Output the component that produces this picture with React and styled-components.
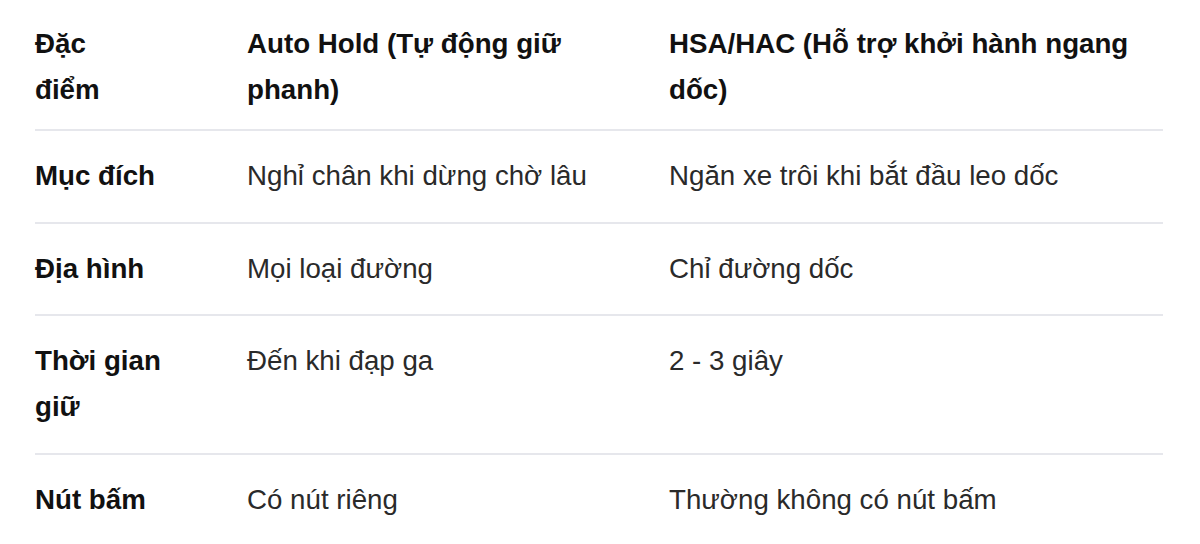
import React from "react";
import styled, { createGlobalStyle } from "styled-components";

const GlobalStyle = createGlobalStyle`
  html, body {
    margin: 0;
    padding: 0;
    background: #ffffff;
  }
  body {
    font-family: "Liberation Sans", Arial, sans-serif;
    color: #1f1f1f;
  }
`;

const Wrap = styled.div`
  padding: 0 37px 0 35px;
`;

const Table = styled.div`
  display: grid;
  grid-template-columns: 212px 422px 1fr;
`;

const Row = styled.div`
  display: contents;
`;

const Cell = styled.div`
  font-size: 27.7px;
  line-height: 46px;
  font-weight: ${(props) => (props.bold ? 700 : 400)};
  color: ${(props) => (props.bold ? "#111111" : "#2a2a2a")};
  padding-top: ${(props) => (props.head ? "21px" : "22px")};
  padding-bottom: ${(props) => (props.head ? "16px" : "22.5px")};
  padding-right: ${(props) => props.gap || 0}px;
  border-bottom: ${(props) => (props.last ? "none" : "2px solid #e6e7ec")};
`;

const gaps = [77, 40, 0];

const rows = [
  ["Mục đích", "Nghỉ chân khi dừng chờ lâu", "Ngăn xe trôi khi bắt đầu leo dốc"],
  ["Địa hình", "Mọi loại đường", "Chỉ đường dốc"],
  ["Thời gian giữ", "Đến khi đạp ga", "2 - 3 giây"],
  ["Nút bấm", "Có nút riêng", "Thường không có nút bấm"],
];

export default function App() {
  return (
    <>
      <GlobalStyle />
      <Wrap>
        <Table>
          <Row>
            <Cell head bold gap={gaps[0]}>
              Đặc
              <br />
              điểm
            </Cell>
            <Cell head bold gap={gaps[1]}>Auto Hold (Tự động giữ phanh)</Cell>
            <Cell head bold gap={gaps[2]}>HSA/HAC (Hỗ trợ khởi hành ngang dốc)</Cell>
          </Row>
          {rows.map((r, i) => (
            <Row key={i}>
              {r.map((text, j) => (
                <Cell
                  key={j}
                  bold={j === 0}
                  gap={gaps[j]}
                  last={i === rows.length - 1}
                >
                  {text}
                </Cell>
              ))}
            </Row>
          ))}
        </Table>
      </Wrap>
    </>
  );
}
